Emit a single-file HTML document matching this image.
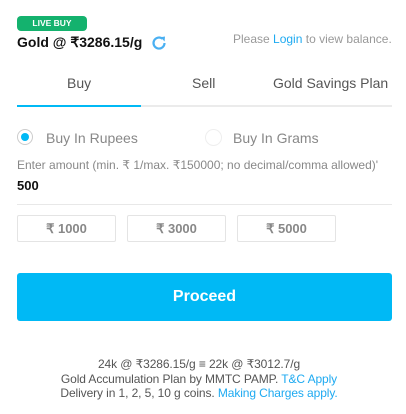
<!DOCTYPE html>
<html><head><style>
body{margin:0;width:406px;height:414px;background:#fff;font-family:"Liberation Sans",sans-serif;position:relative;overflow:hidden}
.a{position:absolute}
.badge{left:17px;top:16px;width:70px;height:15px;background:#14b26e;border-radius:4px;color:#fff;font-size:8.5px;font-weight:bold;text-align:center;line-height:15px}
.tab{top:75px;font-size:14px;color:#555}
.btn{top:215px;width:97px;height:25px;border:1px solid #e4e4e4;border-radius:2px;color:#888;font-weight:bold;font-size:13px;text-align:center;line-height:25px}
.blue{color:#1eaaf1}
</style></head><body>
<div class="a badge">LIVE BUY</div>
<div class="a" style="left:17px;top:34px;font-size:14px;font-weight:bold;color:#111">Gold @ ₹3286.15/g</div>
<svg class="a" style="left:151px;top:35px" width="16" height="16" viewBox="0 0 16 16"><path d="M13.5 8A5.5 5.5 0 1 1 11.5 3.8" fill="none" stroke="#4ab0f2" stroke-width="2.2"/><path d="M9.5 2.2L14 1.5L13.6 6.5Z" fill="#4ab0f2"/></svg>
<div class="a" style="left:233px;top:32px;font-size:12px;color:#999">Please <span class="blue">Login</span> to view balance.</div>
<div class="a tab" style="left:67px">Buy</div>
<div class="a tab" style="left:192px">Sell</div>
<div class="a tab" style="left:273px">Gold Savings Plan</div>
<div class="a" style="left:17px;top:105px;width:375px;height:2px;background:#ebebeb"></div>
<div class="a" style="left:17px;top:105px;width:124px;height:2px;background:#00b9f5"></div>
<div class="a" style="left:17px;top:129px;width:14px;height:14px;border:1px solid #ccc;border-radius:50%"></div>
<div class="a" style="left:21px;top:133px;width:8px;height:8px;background:#00b9f5;border-radius:50%"></div>
<div class="a" style="left:46px;top:130px;font-size:14px;color:#888">Buy In Rupees</div>
<div class="a" style="left:205px;top:129px;width:15px;height:15px;border:1px solid #eee;border-radius:50%"></div>
<div class="a" style="left:233px;top:130px;font-size:14px;color:#888">Buy In Grams</div>
<div class="a" style="left:17px;top:158px;font-size:12px;color:#888">Enter amount (min. ₹ 1/max. ₹150000; no decimal/comma allowed)'</div>
<div class="a" style="left:17px;top:178px;font-size:13px;font-weight:bold;color:#111">500</div>
<div class="a" style="left:17px;top:204px;width:375px;height:1px;background:#e8e8e8"></div>
<div class="a btn" style="left:17px">₹ 1000</div>
<div class="a btn" style="left:127px">₹ 3000</div>
<div class="a btn" style="left:237px">₹ 5000</div>
<div class="a" style="left:17px;top:273px;width:375px;height:48px;background:#00b9f5;border-radius:3px;color:#fff;font-weight:bold;font-size:16px;text-align:center;line-height:48px">Proceed</div>
<div class="a" style="left:0;top:357px;width:406px;text-align:center;font-size:12px;color:#555;line-height:14.5px;padding-right:8px;box-sizing:border-box;letter-spacing:-0.1px">24k @ ₹3286.15/g ≡ 22k @ ₹3012.7/g<br>Gold Accumulation Plan by MMTC PAMP. <span class="blue">T&amp;C Apply</span><br>Delivery in 1, 2, 5, 10 g coins. <span class="blue">Making Charges apply.</span></div>
</body></html>
